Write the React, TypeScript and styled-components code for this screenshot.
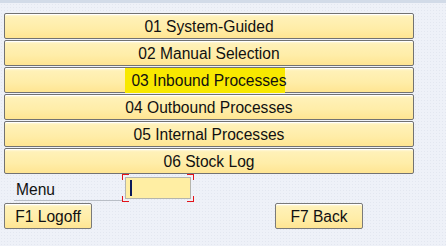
import React from "react";
import styled, { createGlobalStyle } from "styled-components";

const Global = createGlobalStyle`
  html, body { margin: 0; padding: 0; }
  body {
    background: #eef1f8;
    font-family: "Liberation Sans", Arial, sans-serif;
    width: 446px;
    height: 246px;
    overflow: hidden;
  }
`;

const Screen = styled.div`
  width: 446px;
  height: 246px;
  box-sizing: border-box;
  border-top: 3px solid #d2dbe8;
  background-color: #eef1f8;
  background-image: radial-gradient(#e3e7f0 0.6px, transparent 0.7px);
  background-size: 3px 3px;
  padding: 10px 0 0 4px;
  display: flex;
  flex-direction: column;
`;

const MenuList = styled.div`
  width: 410px;
  display: flex;
  flex-direction: column;
  gap: 1px;
`;

const MenuButton = styled.button`
  height: 26px;
  width: 100%;
  box-sizing: border-box;
  border: 1px solid #727272;
  border-radius: 2px;
  background: linear-gradient(#fffbe6 0%, #fff1b8 12%, #ffeda8 60%, #ffe592 100%);
  box-shadow: inset 0 1px 0 #ffffff;
  font-family: "Liberation Sans", Arial, sans-serif;
  font-size: 15.6px;
  color: #111;
  display: flex;
  align-items: center;
  justify-content: center;
  padding: 2px 0 0 0;
`;

const Highlight = styled.span`
  height: 25px;
  margin-top: -2px;
  padding-top: 2px;
  box-sizing: border-box;
  display: flex;
  align-items: center;
  padding-left: 6px;
  margin-left: -6px;
  background: linear-gradient(#f8e800, #f8e800) no-repeat left top / calc(100% - 2px) 100%;
`;

const FieldRow = styled.div`
  display: flex;
  align-items: center;
  height: 28px;
  margin-top: 0;
`;

const Label = styled.div`
  width: 108px;
  margin-left: 10px;
  height: 25px;
  box-sizing: border-box;
  padding: 5px 0 0 2px;
  border-bottom: 1px solid #b9bec6;
  font-size: 15.6px;
  color: #111;
`;

const InputFrame = styled.div`
  position: relative;
  width: 72px;
  height: 28px;
  display: flex;
  align-items: center;
  justify-content: center;
`;

const Corner = styled.span<{ $v: "top" | "bottom"; $h: "left" | "right" }>`
  position: absolute;
  ${(p) => p.$v}: 0;
  ${(p) => p.$h}: 0;
  width: 6px;
  height: 5px;
  border-${(p) => p.$v}: 1px solid #e3131a;
  border-${(p) => p.$h}: 1px solid #e3131a;
`;

const Input = styled.div`
  width: 66px;
  height: 22px;
  box-sizing: border-box;
  border: 1px solid #b5b5ad;
  background: #ffeea3;
  display: flex;
  align-items: center;
  padding-left: 4px;
`;

const Caret = styled.span`
  width: 2px;
  height: 16px;
  background: #0c1a5a;
`;

const ActionRow = styled.div`
  display: flex;
  margin-top: 1px;
`;

const ActionButton = styled.button<{ $w: number; $ml?: number }>`
  width: ${(p) => p.$w}px;
  margin-left: ${(p) => p.$ml ?? 0}px;
  height: 26px;
  box-sizing: border-box;
  border: 1px solid #7a7a7a;
  border-radius: 2px;
  background: linear-gradient(#fffbe6 0%, #fff1b8 12%, #ffeda8 60%, #ffe592 100%);
  box-shadow: inset 0 1px 0 #ffffff;
  font-family: "Liberation Sans", Arial, sans-serif;
  font-size: 15.6px;
  color: #111;
  padding: 2px 0 0 0;
`;

const items = [
  "01 System-Guided",
  "02 Manual Selection",
  "03 Inbound Processes",
  "04 Outbound Processes",
  "05 Internal Processes",
  "06 Stock Log",
];

export default function App() {
  return (
    <>
      <Global />
      <Screen>
        <MenuList>
          {items.map((t, i) => (
            <MenuButton key={t}>
              {i === 2 ? <Highlight>{t}</Highlight> : t}
            </MenuButton>
          ))}
        </MenuList>
        <FieldRow>
          <Label>Menu</Label>
          <InputFrame>
            <Corner $v="top" $h="left" />
            <Corner $v="top" $h="right" />
            <Corner $v="bottom" $h="left" />
            <Corner $v="bottom" $h="right" />
            <Input>
              <Caret />
            </Input>
          </InputFrame>
        </FieldRow>
        <ActionRow>
          <ActionButton $w={88}>F1 Logoff</ActionButton>
          <ActionButton $w={88} $ml={183}>F7 Back</ActionButton>
        </ActionRow>
      </Screen>
    </>
  );
}
